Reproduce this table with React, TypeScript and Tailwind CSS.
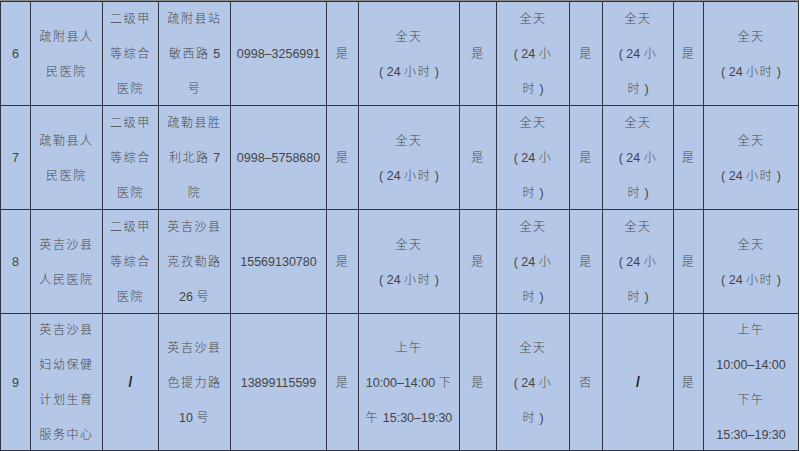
import React from "react";

type Cell = string | string[];

const rows: Cell[][] = [
  [
    "6",
    ["疏附县人", "民医院"],
    ["二级甲", "等综合", "医院"],
    ["疏附县站", "敏西路 5", "号"],
    "0998–3256991",
    "是",
    ["全天", "( 24 小时 )"],
    "是",
    ["全天", "( 24 小", "时 )"],
    "是",
    ["全天", "( 24 小", "时 )"],
    "是",
    ["全天", "( 24 小时 )"],
  ],
  [
    "7",
    ["疏勒县人", "民医院"],
    ["二级甲", "等综合", "医院"],
    ["疏勒县胜", "利北路 7", "院"],
    "0998–5758680",
    "是",
    ["全天", "( 24 小时 )"],
    "是",
    ["全天", "( 24 小", "时 )"],
    "是",
    ["全天", "( 24 小", "时 )"],
    "是",
    ["全天", "( 24 小时 )"],
  ],
  [
    "8",
    ["英吉沙县", "人民医院"],
    ["二级甲", "等综合", "医院"],
    ["英吉沙县", "克孜勒路", "26 号"],
    "15569130780",
    "是",
    ["全天", "( 24 小时 )"],
    "是",
    ["全天", "( 24 小", "时 )"],
    "是",
    ["全天", "( 24 小", "时 )"],
    "是",
    ["全天", "( 24 小时 )"],
  ],
  [
    "9",
    ["英吉沙县", "妇幼保健", "计划生育", "服务中心"],
    "/",
    ["英吉沙县", "色提力路", "10 号"],
    "13899115599",
    "是",
    ["上午", "10:00–14:00 下", "午 15:30–19:30"],
    "是",
    ["全天", "( 24 小", "时 )"],
    "否",
    "/",
    "是",
    ["上午", "10:00–14:00", "下午", "15:30–19:30"],
  ],
];

function Runs({ text }: { text: string }) {
  const parts = text.match(/[\x00-\x7f\u2013]+|[^\x00-\x7f\u2013]+/g) || [];
  return (
    <>
      {parts.map((p, i) =>
        /^[\x00-\x7f\u2013]+$/.test(p) ? (
          p.trim() === "/" ? (
            <span key={i} className="text-[14px] font-bold text-[#222]">
              {p}
            </span>
          ) : (
            <span key={i} className="text-[12.5px] tracking-normal text-[#444]">
              {p}
            </span>
          )
        ) : (
          <span key={i} className="text-[12px] tracking-[1.6px] font-light text-[#4a4a4a]">
            {p}
          </span>
        )
      )}
    </>
  );
}

function CellView({ c }: { c: Cell }) {
  const lines = Array.isArray(c) ? c : [c];
  return (
    <div className="flex flex-col items-center justify-center bg-[#b4c7e7] leading-[34px] overflow-hidden">
      {lines.map((l, i) => (
        <div key={i} className="whitespace-pre text-center">
          <Runs text={l} />
        </div>
      ))}
    </div>
  );
}

export default function App() {
  return (
    <div
      className="w-[800px] h-[451px] bg-white overflow-hidden"
      style={{ fontFamily: '"Liberation Sans", "Noto Sans CJK SC", sans-serif' }}
    >
      <div className="w-[799px] bg-[#2f3340] p-px grid gap-px grid-cols-[29px_71px_55px_71px_95px_31px_100px_36px_72px_32px_70px_29px_94px] grid-rows-[103px_103px_103px_136px] border-t border-t-[#888]">
        {rows.flatMap((r, ri) => r.map((c, ci) => <CellView key={ri + "-" + ci} c={c} />))}
      </div>
    </div>
  );
}
